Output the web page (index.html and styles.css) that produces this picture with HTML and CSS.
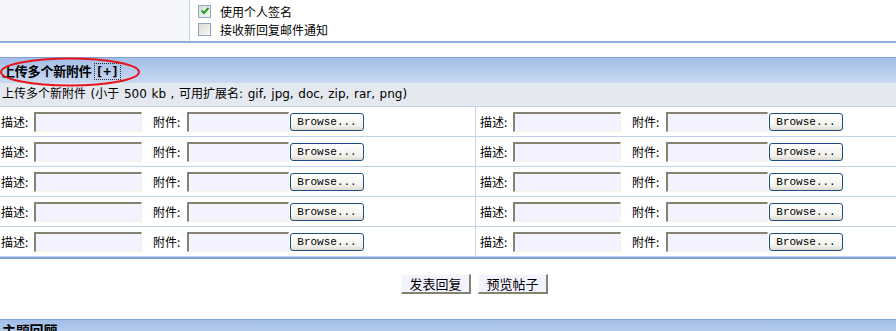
FILE: index.html
```html
<!DOCTYPE html>
<html lang="zh-CN">
<head>
    <meta charset="UTF-8">
    <title>发表回复</title>
    <link rel="stylesheet" href="styles.css">
</head>
<body>

    <div class="options">
        <div class="options-side"></div>
        <div class="options-main">
            <label class="check-line"><span class="check checked"><svg width="10" height="10" viewBox="0 0 10 10"><path d="M1.5 4.5 L4 7 L8.5 1.8" fill="none" stroke="#21a121" stroke-width="2"/></svg></span>使用个人签名</label>
            <label class="check-line"><span class="check"></span>接收新回复邮件通知</label>
        </div>
    </div>

    <div class="section">
        <div class="section-head">
            <b>上传多个新附件</b> <span class="add">[+]</span>
            <svg class="mark" width="144" height="32" viewBox="0 0 144 32"><ellipse cx="71" cy="15" rx="69" ry="13.5" fill="none" stroke="#e8141c" stroke-width="2"/></svg>
        </div>
        <div class="section-note">上传多个新附件 (小于 500 kb , 可用扩展名: gif, jpg, doc, zip, rar, png)</div>

        <div class="attach-grid">
            <div class="cell first"><span class="lbl">描述:</span><input class="txt" type="text"><span class="lbl2">附件:</span><input class="txt file" type="text"><button class="browse" type="button">Browse...</button></div>
            <div class="cell"><span class="lbl">描述:</span><input class="txt" type="text"><span class="lbl2">附件:</span><input class="txt file" type="text"><button class="browse" type="button">Browse...</button></div>
            <div class="cell first"><span class="lbl">描述:</span><input class="txt" type="text"><span class="lbl2">附件:</span><input class="txt file" type="text"><button class="browse" type="button">Browse...</button></div>
            <div class="cell"><span class="lbl">描述:</span><input class="txt" type="text"><span class="lbl2">附件:</span><input class="txt file" type="text"><button class="browse" type="button">Browse...</button></div>
            <div class="cell first"><span class="lbl">描述:</span><input class="txt" type="text"><span class="lbl2">附件:</span><input class="txt file" type="text"><button class="browse" type="button">Browse...</button></div>
            <div class="cell"><span class="lbl">描述:</span><input class="txt" type="text"><span class="lbl2">附件:</span><input class="txt file" type="text"><button class="browse" type="button">Browse...</button></div>
            <div class="cell first"><span class="lbl">描述:</span><input class="txt" type="text"><span class="lbl2">附件:</span><input class="txt file" type="text"><button class="browse" type="button">Browse...</button></div>
            <div class="cell"><span class="lbl">描述:</span><input class="txt" type="text"><span class="lbl2">附件:</span><input class="txt file" type="text"><button class="browse" type="button">Browse...</button></div>
            <div class="cell first"><span class="lbl">描述:</span><input class="txt" type="text"><span class="lbl2">附件:</span><input class="txt file" type="text"><button class="browse" type="button">Browse...</button></div>
            <div class="cell"><span class="lbl">描述:</span><input class="txt" type="text"><span class="lbl2">附件:</span><input class="txt file" type="text"><button class="browse" type="button">Browse...</button></div>
        </div>
    </div>

    <div class="actions">
        <button class="act" type="submit">发表回复</button>
        <button class="act" type="button">预览帖子</button>
    </div>

    <div class="section-head next"><b>主题回顾</b></div>

</body>
</html>
```

FILE: styles.css
```css
body {
    font-family: "DejaVu Sans", "Noto Sans CJK SC", sans-serif;
    font-size: 12px;
    color: #000;
    background-color: #fff;
    margin: 0;
    padding: 0;
    overflow: hidden;
}

.options {
    display: flex;
    height: 41px;
    border-bottom: 2px solid #8eaedc;
}

.options-side {
    width: 189px;
    background-color: #f5f6fc;
    border-right: 1px solid #c6d3e6;
}

.options-main {
    padding: 2px 0 0 8px;
}

.check-line {
    display: flex;
    align-items: center;
    height: 18px;
    font-family: "Noto Sans CJK SC", sans-serif;
}

.check {
    display: inline-flex;
    align-items: center;
    justify-content: center;
    width: 11px;
    height: 11px;
    margin-right: 9px;
    border: 1px solid #8fa6c4;
    background: linear-gradient(135deg, #dcdcd6, #f8f8f6);
}

.section {
    margin-top: 14px;
}

.section-head {
    position: relative;
    height: 25px;
    line-height: 26px;
    padding-left: 2px;
    border-top: 1px solid #7ea2d8;
    background: linear-gradient(#a3bee7, #c9d9f1);
    font-family: "Noto Sans CJK SC", sans-serif;
    font-size: 13px;
}

.section-head b {
    font-weight: bold;
    letter-spacing: -0.2px;
}

.add {
    font-family: "DejaVu Sans Mono", monospace;
    font-weight: bold;
    font-size: 13px;
    outline: 1px dotted #333;
    padding: 0 1px;
}

.mark {
    position: absolute;
    left: -1px;
    top: -1px;
}

.section-note {
    height: 23px;
    line-height: 23px;
    padding-left: 2px;
    word-spacing: 0.8px;
    background-color: #e4e8ef;
    border-bottom: 1px solid #c1d3ec;
}

.attach-grid {
    display: grid;
    grid-template-columns: 476px 1fr;
    border-bottom: 2px solid #7ea4d6;
}

.cell {
    display: flex;
    align-items: center;
    height: 29px;
    padding-left: 4px;
    border-bottom: 1px solid #c1d3ec;
    font-family: "Noto Sans CJK SC", sans-serif;
}

.cell.first {
    padding-left: 1px;
    border-right: 1px solid #c1d3ec;
}

.lbl {
    width: 33px;
}

.lbl2 {
    width: 34px;
    margin-left: 11px;
}

.txt {
    width: 108px;
    height: 20px;
    box-sizing: border-box;
    margin: 0;
    padding: 0;
    background-color: #f3f2ff;
    border-style: solid;
    border-width: 2px 1px 1px 2px;
    border-color: #858272 #f6f3e6 #f6f3e6 #858272;
}

.txt.file {
    width: 102px;
    margin-right: 1px;
}

.browse {
    width: 74px;
    height: 18px;
    padding: 0;
    margin: 0;
    font-family: "Liberation Mono", monospace;
    font-size: 11px;
    color: #000;
    border: 1px solid #1f4e87;
    border-radius: 3px;
    background: linear-gradient(#ffffff, #f3f3ee 70%, #dedbd0);
}

.actions {
    display: flex;
    justify-content: center;
    gap: 7px;
    padding: 15px 0 0 53px;
    height: 45px;
    box-sizing: border-box;
}

.act {
    width: 70px;
    height: 20px;
    padding: 0;
    font-family: "Noto Sans CJK SC", sans-serif;
    font-size: 13px;
    line-height: 16px;
    background-color: #f3f2ff;
    border-style: solid;
    border-width: 1px 2px 2px 1px;
    border-color: #fdfcf4 #858272 #858272 #fdfcf4;
}

.section-head.next {
    margin-top: 15px;
    line-height: 20px;
    font-size: 14px;
}
```
